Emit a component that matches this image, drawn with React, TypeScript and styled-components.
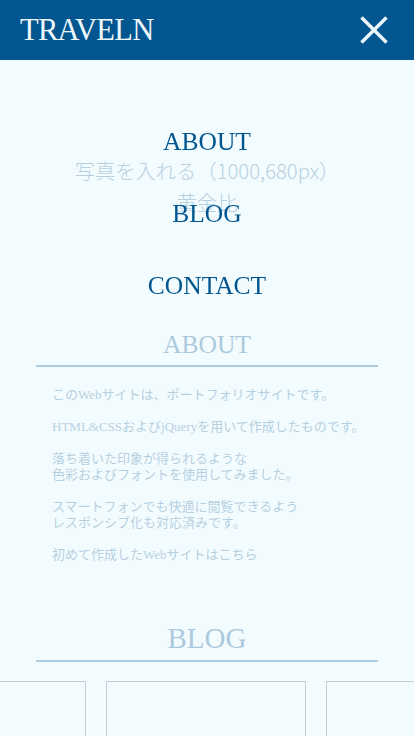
import React from "react";
import styled, { createGlobalStyle } from "styled-components";

const GlobalStyle = createGlobalStyle`
  html, body {
    margin: 0;
    padding: 0;
    overflow: hidden;
    background: #f2fbfe;
  }
  * { box-sizing: border-box; }
`;

const Page = styled.div`
  width: 414px;
  min-height: 736px;
  background: #f2fbfe;
  font-family: "Liberation Serif", "Noto Sans CJK JP", serif;
`;

const Header = styled.header`
  position: relative;
  z-index: 2;
  height: 60px;
  background: #03568f;
  display: flex;
  align-items: center;
  justify-content: space-between;
  padding: 0 26px 0 20px;
`;

const Logo = styled.h1`
  margin: 0;
  font-family: "Liberation Serif", serif;
  font-weight: 400;
  font-size: 30.5px;
  letter-spacing: -0.7px;
  line-height: 1;
  color: #eef7fc;
  padding-top: 1px;
`;

const CloseButton = styled.button`
  width: 28px;
  height: 28px;
  padding: 0;
  border: none;
  background: transparent;
  display: flex;
  align-items: center;
  justify-content: center;
  cursor: pointer;
`;

const Hero = styled.div`
  height: 252px;
  display: flex;
  flex-direction: column;
  align-items: center;
  justify-content: center;
`;

const HeroText = styled.p`
  margin: 0;
  font-family: "Noto Sans CJK JP", sans-serif;
  font-weight: 300;
  font-size: 20.3px;
  line-height: 32px;
  color: #1f6a9c;
  white-space: nowrap;
`;

const Section = styled.section<{ $top: number }>`
  margin: ${(p) => p.$top}px 36px 0;
`;

const SectionTitle = styled.h2<{ $size: number; $pad: number }>`
  margin: 0;
  text-align: center;
  font-family: "Liberation Serif", serif;
  font-weight: 400;
  font-size: ${(p) => p.$size}px;
  line-height: 32px;
  padding-bottom: ${(p) => p.$pad}px;
  color: #02568f;
  border-bottom: 2px solid #0f5f95;
`;

const AboutBody = styled.div`
  padding: 20px 0 0 16px;
  font-family: "Liberation Serif", "Noto Sans CJK JP", serif;
  font-size: 13px;
  line-height: 16px;
  color: #1f6a9c;
  white-space: nowrap;

  p {
    margin: 0 0 16px;
  }
  p:last-child {
    margin-bottom: 0;
  }
`;

const Carousel = styled.div`
  display: flex;
  justify-content: center;
  gap: 20px;
  margin: 19px -36px 0;
  padding-right: 2px;
`;

const Card = styled.div`
  flex: 0 0 200px;
  height: 180px;
  border: 1px solid #56626a;
`;

const MenuOverlay = styled.div`
  position: fixed;
  top: 60px;
  left: 0;
  right: 0;
  bottom: 0;
  z-index: 1;
  background: rgba(242, 251, 254, 0.7);
  padding-top: 66px;
`;

const NavList = styled.ul`
  list-style: none;
  margin: 0;
  padding: 0;
  display: flex;
  flex-direction: column;
  align-items: center;
  gap: 40px;
`;

const NavLink = styled.a`
  display: block;
  font-family: "Liberation Serif", serif;
  font-size: 25.5px;
  line-height: 32px;
  color: #02568f;
  text-decoration: none;
`;

const navItems = ["ABOUT", "BLOG", "CONTACT"];

export default function App() {
  return (
    <Page>
      <GlobalStyle />
      <Header>
        <Logo>TRAVELN</Logo>
        <CloseButton aria-label="close menu">
          <svg width="28" height="28" viewBox="0 0 28 28">
            <path
              d="M1.5 1.5 L26.5 26.5 M26.5 1.5 L1.5 26.5"
              stroke="#eef7fc"
              strokeWidth="3.4"
              fill="none"
            />
          </svg>
        </CloseButton>
      </Header>

      <Hero>
        <HeroText>写真を入れる（1000,680px）</HeroText>
        <HeroText>黄金比</HeroText>
      </Hero>

      <Section $top={17}>
        <SectionTitle $size={25.5} $pad={4}>ABOUT</SectionTitle>
        <AboutBody>
          <p>このWebサイトは、ポートフォリオサイトです。</p>
          <p>HTML&amp;CSSおよびjQueryを用いて作成したものです。</p>
          <p>
            落ち着いた印象が得られるような
            <br />
            色彩およびフォントを使用してみました。
          </p>
          <p>
            スマートフォンでも快適に閲覧できるよう
            <br />
            レスポンシブ化も対応済みです。
          </p>
          <p>初めて作成したWebサイトはこちら</p>
        </AboutBody>
      </Section>

      <Section $top={59}>
        <SectionTitle $size={29} $pad={6}>BLOG</SectionTitle>
        <Carousel>
          <Card />
          <Card />
          <Card />
        </Carousel>
      </Section>

      <MenuOverlay>
        <nav>
          <NavList>
            {navItems.map((item) => (
              <li key={item}>
                <NavLink href={`#${item.toLowerCase()}`}>{item}</NavLink>
              </li>
            ))}
          </NavList>
        </nav>
      </MenuOverlay>
    </Page>
  );
}
